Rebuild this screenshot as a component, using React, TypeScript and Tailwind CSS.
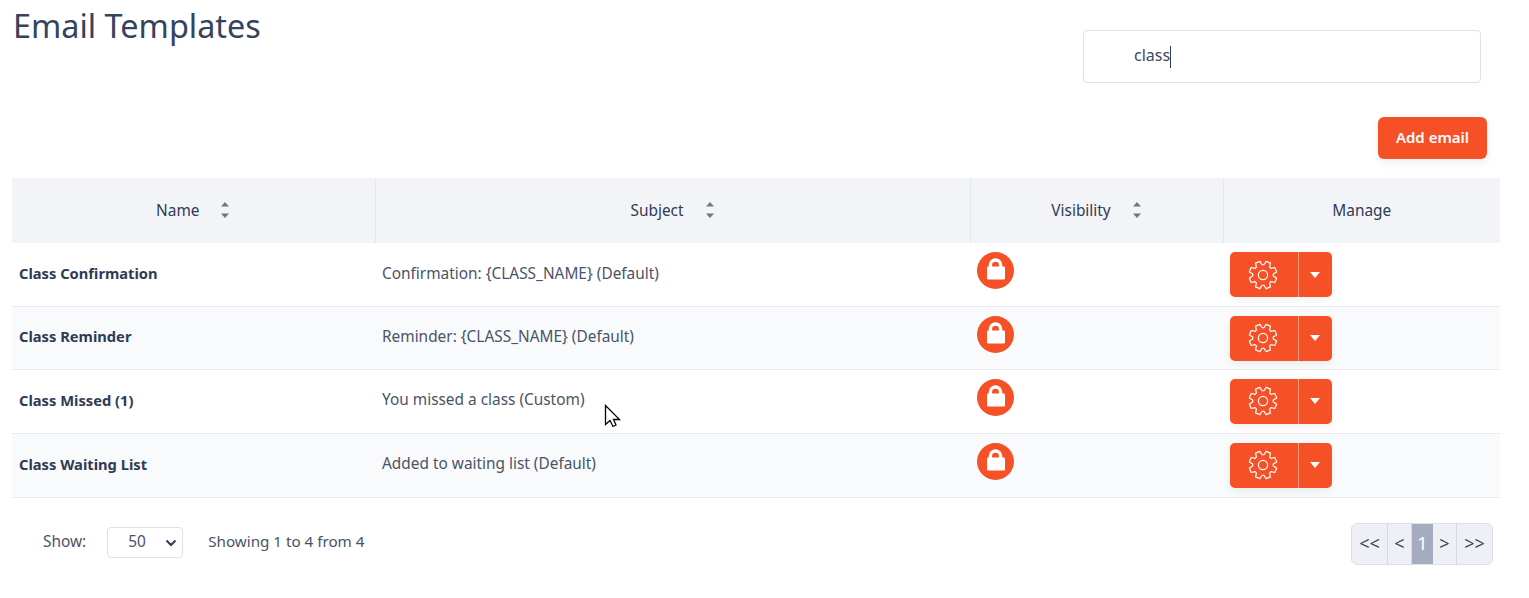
const ROWS = [
  { name: 'Class Confirmation', subject: 'Confirmation: {CLASS_NAME} (Default)', h: 'h-[63px]' },
  { name: 'Class Reminder', subject: 'Reminder: {CLASS_NAME} (Default)', h: 'h-[63px]' },
  { name: 'Class Missed (1)', subject: 'You missed a class (Custom)', h: 'h-[64px]' },
  { name: 'Class Waiting List', subject: 'Added to waiting list (Default)', h: 'h-[64px]' },
]

// 8 tooth gear outline
function gearPath(cx: number, cy: number, outer: number, inner: number) {
  const pts: string[] = []
  for (let i = 0; i < 8; i++) {
    const a = (i * Math.PI) / 4 + Math.PI / 8
    const at = (r: number, d: number) =>
      `${(cx + r * Math.cos(a + d)).toFixed(2)} ${(cy + r * Math.sin(a + d)).toFixed(2)}`
    pts.push(`${i === 0 ? 'M' : 'L'}${at(inner, -0.3)}`)
    pts.push(`L${at(outer, -0.17)}`)
    pts.push(`L${at(outer, 0.17)}`)
    pts.push(`L${at(inner, 0.3)}`)
  }
  return pts.join(' ') + ' Z'
}

const GEAR = gearPath(15, 15, 14, 10.3)

function SortArrows() {
  return (
    <svg width="10" height="18" viewBox="0 0 10 18" className="text-[#6f7585]">
      <path d="M5 1l4 4.500H1z M1 12.500h8L5 17z" fill="currentColor" />
    </svg>
  )
}

function LockBadge() {
  return (
    <svg width="37" height="37" viewBox="0 0 37 37">
      <circle cx="18.500" cy="18.500" r="18.500" fill="#f65026" />
      <path d="M13.400 17v-4a5.100 5 0 0 1 10.200 0v4" fill="none" stroke="white" strokeWidth="3.400" />
      <rect x="10" y="14.500" width="18" height="13" rx="1.200" fill="white" />
    </svg>
  )
}

function ManageButton() {
  return (
    <div className="flex w-[102px] h-[45px] rounded-[5px] bg-[#f65026] text-white shadow-[0_3px_8px_rgba(0,0,0,0.06)]">
      <div className="w-[69px] pr-[2px] flex items-center justify-center border-r border-[#fb9a80]">
        <svg width="30" height="30" viewBox="0 0 30 30" fill="none" stroke="white" strokeWidth="1.200" strokeLinejoin="round">
          <path d={GEAR} />
          <circle cx="15" cy="15" r="4.600" />
        </svg>
      </div>
      <div className="flex-1 pr-[2px] flex items-center justify-center">
        <svg width="10" height="6" viewBox="0 0 10 6">
          <path d="M0 0h10L5 6z" fill="white" />
        </svg>
      </div>
    </div>
  )
}

function HeadCell({ label, sort, className }: { label: string; sort?: string; className: string }) {
  return (
    <th className={`font-normal p-0 border-r border-[#e4e7ec] last:border-r-0 ${className}`}>
      <div className="flex items-center justify-center">
        <span>{label}</span>
        {sort && <span className={`flex ${sort}`}><SortArrows /></span>}
      </div>
    </th>
  )
}

export default function App() {
  return (
    <div className="relative w-[1529px] h-[598px] overflow-hidden bg-white text-[#2f3a55] text-[15.400px] font-['Noto_Sans','Open_Sans',sans-serif]">
      <div className="flex h-[178px]">
        <h1 className="ml-[13px] mt-[3px] text-[32.400px] leading-[44px] text-[#36435f] font-normal">Email Templates</h1>
        <div className="ml-auto mr-[42px] flex flex-col items-end">
          <div className="mt-[30px] mr-[6px] w-[398px] h-[53px] pb-[3px] rounded-[4px] border border-[#dfe1e6] pl-[50px] flex items-center text-[#3d4860] text-[16px]">
            class<span className="w-px h-[22px] mt-[3px] bg-[#2f3a55]" />
          </div>
          <button className="mt-[34px] w-[109px] h-[42px] pb-[2px] rounded-[6px] bg-[#f65026] text-white font-semibold text-[15px] shadow-[0_4px_10px_rgba(0,0,0,0.07)]">
            Add email
          </button>
        </div>
      </div>

      <table className="ml-[12px] w-[1488px] table-fixed border-collapse">
        <thead>
          <tr className="h-[65px] bg-[#f3f4f8] text-[#2f3a55]">
            <HeadCell label="Name" sort="ml-[21px]" className="w-[363px]" />
            <HeadCell label="Subject" sort="ml-[21px]" className="w-[595px]" />
            <HeadCell label="Visibility" sort="ml-[21px]" className="w-[253px]" />
            <HeadCell label="Manage" className="w-[277px]" />
          </tr>
        </thead>
        <tbody>
          {ROWS.map((row, i) => (
            <tr key={row.name} className={`${row.h} border-b border-[#e8eaef] ${i % 2 ? 'bg-[#f9fafc]' : 'bg-white'}`}>
              <td className="pl-[7px] pb-[2px] font-bold text-[14.700px] text-[#2f3a55]">{row.name}</td>
              <td className="pl-[7px] pb-[2px] text-[#4a5368]">{row.subject}</td>
              <td className="pl-[7px] align-top pt-[9px]"><LockBadge /></td>
              <td className="pl-[7px] align-top pt-[9px]"><ManageButton /></td>
            </tr>
          ))}
        </tbody>
      </table>

      <div className="flex items-center h-[90px] pl-[43px] pr-[36px] text-[#4a5368]">
        <span className="pb-[2px]">Show:</span>
        <div className="ml-[21px] w-[76px] h-[31px] rounded-[4px] border border-[#dfe1e6] flex items-center pl-[20px] pr-[5px] justify-between">
          <span className="pb-[2px]">50</span>
          <svg width="12" height="8" viewBox="0 0 12 8">
            <path d="M1.500 1.500L6 6l4.500-4.500" fill="none" stroke="#2f3a55" strokeWidth="2" />
          </svg>
        </div>
        <span className="ml-[25px] pb-[2px] text-[15.200px]">Showing 1 to 4 from 4</span>
        <div className="ml-auto mt-[2px] flex w-[142px] h-[42px] rounded-[6px] border border-[#dcdfe6] bg-[#eef0f5] text-[#3c4558] text-[18px] overflow-hidden">
          <span className="w-[36px] flex items-center justify-center border-r border-[#d5d8e0]">&lt;&lt;</span>
          <span className="w-[23px] flex items-center justify-center">&lt;</span>
          <span className="w-[22px] flex items-center justify-center bg-[#a5acbf] text-white border-l border-[#d5d8e0]">1</span>
          <span className="w-[24px] flex items-center justify-center border-r border-[#d5d8e0]">&gt;</span>
          <span className="flex-1 flex items-center justify-center">&gt;&gt;</span>
        </div>
      </div>

      <svg width="18" height="24" viewBox="0 0 18 24" className="absolute left-[604px] top-[404px]">
        <path d="M1.500 1.500v19l4.500-4 3 6 3-1.500-2.500-5.500h6z" fill="white" stroke="black" strokeWidth="1.300" />
      </svg>
    </div>
  )
}
